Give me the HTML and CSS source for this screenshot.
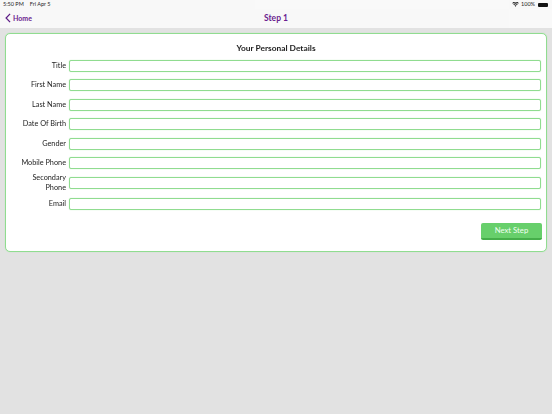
FILE: index.html
```html
<!DOCTYPE html>
<html lang="en">
<head>
  <meta charset="UTF-8" />
  <title>Step 1</title>
  <link rel="stylesheet" href="styles.css">
</head>
<body>

  <div class="status-bar">
    <span>5:50 PM</span>
    <span class="status-date">Fri Apr 5</span>
    <span class="status-right">
      <svg class="wifi" viewBox="0 0 16 12" aria-hidden="true">
        <path d="M8 11.5 5.6 8.6a3.6 3.6 0 0 1 4.8 0zM4.4 7.2 2.9 5.4a7.8 7.8 0 0 1 10.2 0l-1.5 1.8a5.5 5.5 0 0 0-7.2 0zM1.8 4 .3 2.3a11.6 11.6 0 0 1 15.4 0L14.2 4a9.4 9.4 0 0 0-12.4 0z"/>
      </svg>
      <span>100%</span>
      <span class="battery"></span>
    </span>
  </div>

  <nav class="nav-bar">
    <a class="back" href="#">
      <svg class="chevron" viewBox="0 0 7 12" aria-hidden="true">
        <path d="M6 1 1.2 6 6 11"/>
      </svg>
      Home
    </a>
    <h1 class="nav-title">Step 1</h1>
  </nav>

  <form class="card">
    <h2 class="card-title">Your Personal Details</h2>

    <div class="fields">
      <label class="field"><span class="field-label">Title</span><input type="text" /></label>
      <label class="field"><span class="field-label">First Name</span><input type="text" /></label>
      <label class="field"><span class="field-label">Last Name</span><input type="text" /></label>
      <label class="field"><span class="field-label">Date Of Birth</span><input type="text" /></label>
      <label class="field"><span class="field-label">Gender</span><input type="text" /></label>
      <label class="field"><span class="field-label">Mobile Phone</span><input type="text" /></label>
      <label class="field"><span class="field-label">Secondary Phone</span><input type="text" /></label>
      <label class="field"><span class="field-label">Email</span><input type="text" /></label>
    </div>

    <div class="actions">
      <button type="button" class="next-btn">Next Step</button>
    </div>
  </form>

</body>
</html>
```

FILE: styles.css
```css
* {
  box-sizing: border-box;
}

html,
body {
  height: 100%;
}

body {
  margin: 0;
  background: #e2e2e2;
  color: #222;
  font-family: Lato, "Liberation Sans", sans-serif;
  overflow: hidden;
}

.status-bar {
  display: flex;
  align-items: center;
  gap: 6px;
  height: 9px;
  padding: 0 4px 0 3px;
  background: #f9f9f9;
  font-size: 5.5px;
  line-height: 9px;
  color: #222;
  opacity: 0.99;
}

.status-right {
  display: flex;
  align-items: center;
  gap: 2px;
  margin-left: auto;
}

.wifi {
  width: 7px;
  height: 5px;
  fill: #111;
}

.battery {
  width: 10px;
  height: 4px;
  margin-left: 1px;
  border-radius: 1px;
  background: #111;
}

.nav-bar {
  position: relative;
  display: flex;
  align-items: center;
  justify-content: center;
  height: 19px;
  padding-bottom: 1px;
  background: #f9f9f9;
  opacity: 0.99;
}

.back {
  position: absolute;
  left: 5px;
  top: 4px;
  display: flex;
  align-items: center;
  gap: 2px;
  color: #6a1b8f;
  font-size: 7px;
  font-weight: 700;
  text-decoration: none;
}

.chevron {
  width: 6px;
  height: 10px;
  fill: none;
  stroke: #5c1a85;
  stroke-width: 1.5;
}

.nav-title {
  margin: 0;
  color: #6a1b8f;
  font-size: 8.5px;
  font-weight: 700;
}

.card {
  margin: 5px 5px 0;
  height: 219px;
  padding: 9px 5px 0 0;
  background: #fff;
  border: 1px solid #8fdc8f;
  border-radius: 5px;
  box-shadow: 0 0 1px #a6e4a6;
  opacity: 0.99;
}

.card-title {
  margin: 0 0 7px 5px;
  height: 10px;
  font-size: 8.4px;
  font-weight: 700;
  line-height: 10px;
  text-align: center;
  color: #1c1c1c;
}

.fields {
  display: flex;
  flex-direction: column;
  gap: 7.4px;
}

.field {
  display: flex;
  align-items: center;
  gap: 3px;
  min-height: 12px;
}

.field-label {
  width: 60px;
  margin: -3px 0;
  padding-left: 9px;
  flex: none;
  font-size: 7.3px;
  line-height: 10px;
  text-align: right;
  color: #222;
}

.field input {
  flex: 1;
  min-width: 0;
  height: 12px;
  padding: 0 3px;
  background: #fff;
  border: 1px solid #8fdc8f;
  border-radius: 2px;
  box-shadow: 0 0 1px #a6e4a6;
}

.actions {
  display: flex;
  justify-content: flex-end;
  margin: 13.6px -1px 0 0;
}

.next-btn {
  width: 61px;
  height: 17px;
  padding: 0 0 2px;
  background: #66cf6a;
  border: none;
  border-bottom: 2px solid #43ae48;
  border-radius: 2px;
  color: #f2fff2;
  font-family: inherit;
  font-size: 7.7px;
}
```
